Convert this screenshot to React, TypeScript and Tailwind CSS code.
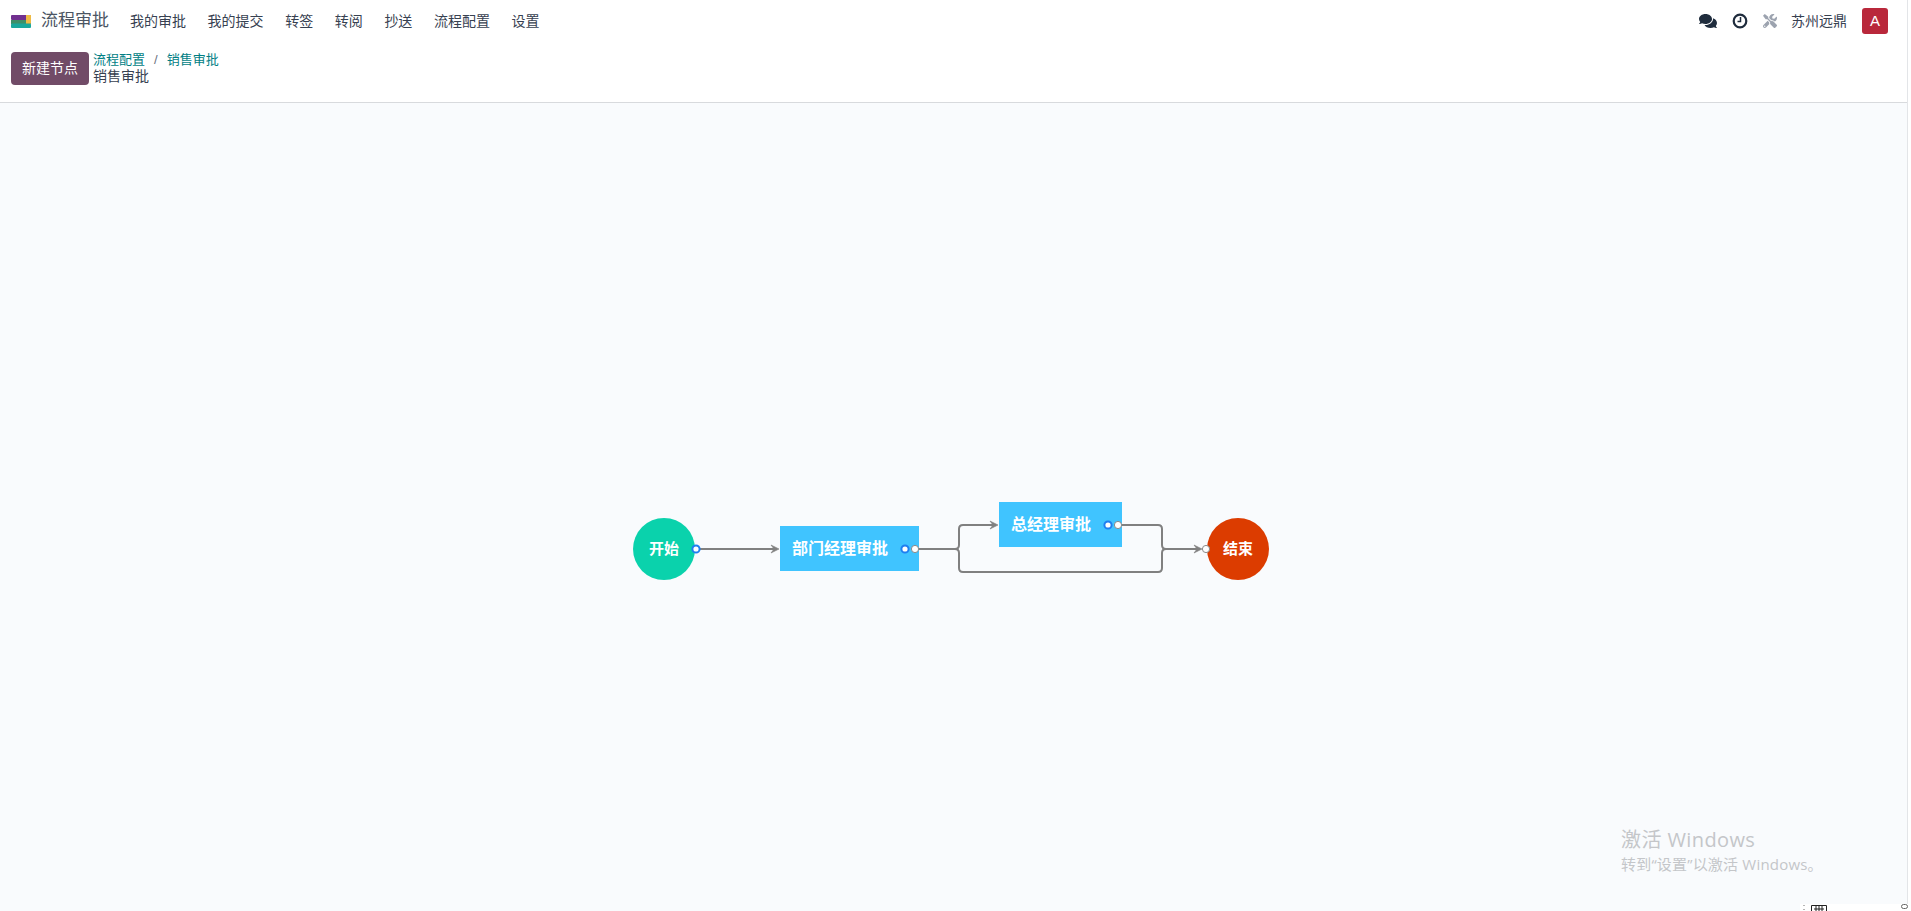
import React from "react";
import { FaComments, FaTools } from "react-icons/fa";

const font = { fontFamily: '"Liberation Sans", "Noto Sans CJK SC", sans-serif' };
const wmFont = { fontFamily: '"Open Sans", "Noto Sans CJK SC", sans-serif' };

function Port({ x, y, blue }: { x: number; y: number; blue?: boolean }) {
  return (
    <circle cx={x} cy={y} r={3.6} fill="#fff" stroke={blue ? "#1f7ff0" : "#8a8a8a"} strokeWidth={blue ? 2 : 1} />
  );
}

function Arrow({ x, y }: { x: number; y: number }) {
  return <path d={`M${x - 8} ${y - 4}L${x} ${y}L${x - 8} ${y + 4}L${x - 5} ${y}Z`} fill="#808080" stroke="#808080" strokeWidth={0.6} />;
}

function Diagram() {
  const stroke = "#808080";
  return (
    <svg className="absolute left-0 top-0" width={1908} height={808} viewBox="0 103 1908 808" aria-hidden>
      <path d="M700 549H775" fill="none" stroke={stroke} strokeWidth={2} />
      <Arrow x={779} y={549} />
      <path d="M919 549H955Q959 549 959 545V529Q959 525 963 525H994" fill="none" stroke={stroke} strokeWidth={2} />
      <Arrow x={998} y={525} />
      <path d="M955 549Q959 549 959 553V568Q959 572 963 572H1158Q1162 572 1162 568V553Q1162 549 1166 549H1198" fill="none" stroke={stroke} strokeWidth={2} />
      <path d="M1122 525H1158Q1162 525 1162 529V545Q1162 549 1166 549" fill="none" stroke={stroke} strokeWidth={2} />
      <Arrow x={1202} y={549} />
    </svg>
  );
}

function Node({ className, label, text }: { className: string; label: string; text: string }) {
  return (
    <div className={`absolute flex items-center text-white font-bold ${className} ${text}`}>{label}</div>
  );
}

function Ports() {
  return (
    <svg className="absolute left-0 top-0" width={1908} height={808} viewBox="0 103 1908 808" aria-hidden>
      <Port x={696} y={549} blue />
      <Port x={905} y={549} blue />
      <Port x={915} y={549} />
      <Port x={1108} y={525} blue />
      <Port x={1118} y={525} />
      <Port x={1206} y={549} />
    </svg>
  );
}

const menu: [string, string][] = [
  ["我的审批", "w-[56px]"],
  ["我的提交", "w-[56px]"],
  ["转签", "w-[28px]"],
  ["转阅", "w-[28px]"],
  ["抄送", "w-[28px]"],
  ["流程配置", "w-[56px]"],
  ["设置", "w-[28px]"],
];

export default function App() {
  return (
    <div className="relative flex h-[911px] w-[1911px] overflow-hidden bg-white text-[14px] text-[#374151]" style={font}>
      <div className="flex h-full w-[1908px] flex-col border-r border-[#e3e5e8]">
        <header className="flex h-[42px] items-center pl-[11px] pr-[19px]">
          <svg width="20" height="13" viewBox="0 0 20 13" className="mr-[10px]" aria-hidden>
            <rect width="20" height="5" rx="1" fill="#71308f" />
            <rect y="5" width="20" height="4" fill="#3f8f68" />
            <rect y="8.500" width="20" height="4.500" rx="1" fill="#1aa79c" />
            <rect x="15" width="5" height="8.500" fill="#efbb45" />
          </svg>
          <span className="mr-[21px] text-[17px] text-[#4b5563]">流程审批</span>
          <nav className="flex gap-[21.600px]">
            {menu.map(([m, w]) => (
              <span key={m} className={`whitespace-nowrap ${w}`}>{m}</span>
            ))}
          </nav>
          <div className="ml-auto flex items-center">
            <FaComments className="mr-[15px] h-[18px] w-[18px] text-[#1f2c3d]" />
            <svg width="16" height="16" viewBox="0 0 16 16" className="mr-[15px]" aria-hidden>
              <circle cx="8" cy="8" r="6.300" fill="none" stroke="#1f2c3d" strokeWidth="2.200" />
              <path d="M8.500 4v4.500H5.500" fill="none" stroke="#1f2c3d" strokeWidth="1.500" />
            </svg>
            <FaTools className="mr-[14px] h-[14px] w-[14px] text-[#9ca3af]" />
            <span className="mr-[15px] whitespace-nowrap text-[#374151]">苏州远鼎</span>
            <div className="flex h-[26px] w-[26px] items-center justify-center rounded-[3px] bg-[#b9283b] text-[15px] text-white">A</div>
          </div>
        </header>
        <div className="flex h-[61px] items-start border-b border-[#d8dadd] pl-[11px] pt-[10px]">
          <button className="h-[33px] w-[78px] rounded-[4px] bg-[#714b67] text-white">新建节点</button>
          <div className="-mt-[1px] ml-[4px] leading-[17px]">
            <div className="flex items-center text-[13px] text-[#017e84]">
              <span>流程配置</span>
              <span className="mx-[9px] text-[#6b7280]">/</span>
              <span>销售审批</span>
            </div>
            <div className="text-[#374151]">销售审批</div>
          </div>
        </div>
        <main className="relative flex-1 bg-[#f9fbfd]">
          <Diagram />
          <Node label="开始" className="left-[633px] top-[415px] h-[62px] w-[62px] justify-center rounded-full bg-[#0ad2ac]" text="text-[15px]" />
          <Node label="部门经理审批" className="left-[780px] top-[423px] h-[45px] w-[139px] bg-[#40c4ff] pl-[12px]" text="text-[16px]" />
          <Node label="总经理审批" className="left-[999px] top-[399px] h-[45px] w-[123px] bg-[#40c4ff] pl-[12px]" text="text-[16px]" />
          <Node label="结束" className="left-[1207px] top-[415px] h-[62px] w-[62px] justify-center rounded-full bg-[#dc3c00]" text="text-[15px]" />
          <Ports />
          <div className="absolute left-[1621px] top-[723px] text-[20px] leading-[28px] tracking-[0.400px] text-[#c4c6c9]" style={wmFont}>激活 Windows</div>
          <div className="absolute left-[1621px] top-[750px] text-[15px] leading-[22px] tracking-[0.200px] text-[#c4c6c9]" style={wmFont}>转到“设置”以激活 Windows。</div>
        </main>
      </div>
      <div className="absolute bottom-0 right-0 flex h-[7px] w-[111px] items-start overflow-hidden bg-white pl-[3px]">
        <span className="mt-[1px] h-[5px] w-[2px] border-y border-[#b5b5b5]" />
        <svg width="16" height="7" viewBox="0 0 16 7" className="ml-[6px] mt-[1px]" aria-hidden>
          <path d="M.5 7V.5H15.500V7" fill="none" stroke="#222" />
          <path d="M5 1V7M8 1V7M11 1V7M3 4H13" stroke="#222" />
        </svg>
        <span className="ml-auto mr-[3px] h-[5px] w-[7px] rounded-full border border-[#666]" />
      </div>
    </div>
  );
}
